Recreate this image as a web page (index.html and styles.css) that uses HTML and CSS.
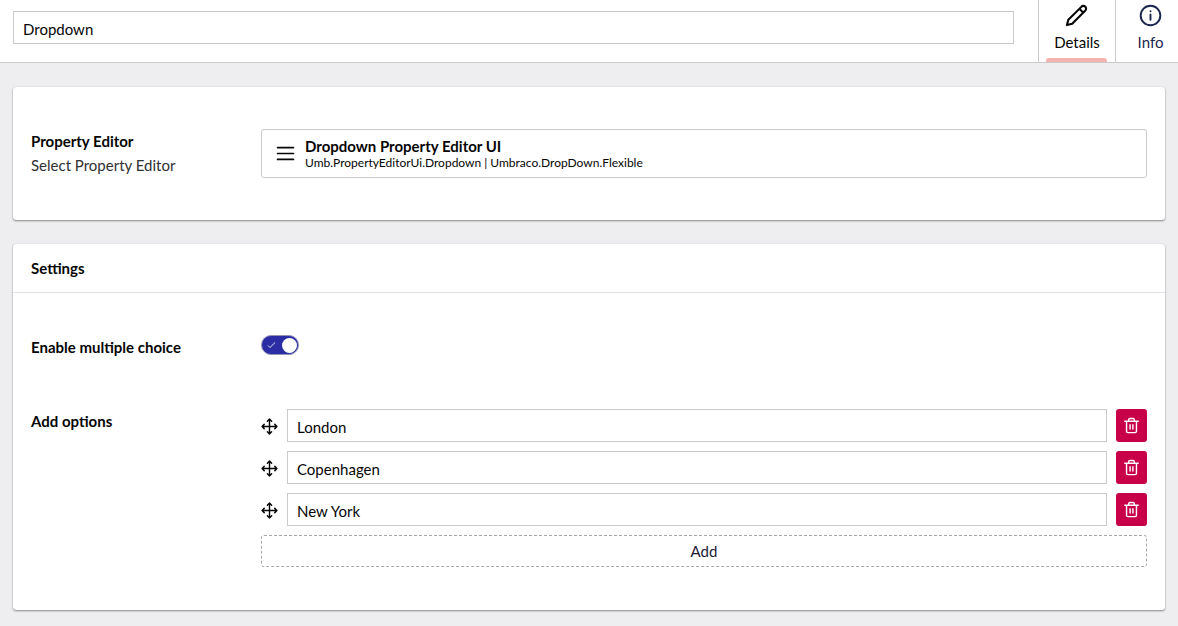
FILE: index.html
```html
<!DOCTYPE html>
<html lang="en">
<head>
<meta charset="utf-8">
<title>Dropdown</title>
<link rel="stylesheet" href="styles.css">
</head>
<body>
<svg class="sprite" aria-hidden="true">
  <symbol id="move" viewBox="0 0 24 24"><path d="M4.500 9l-3 3 3 3M9 4.500l3-3 3 3M15 19.500l-3 3-3-3M19.500 9l3 3-3 3M1.500 12h21M12 1.500v21"/></symbol>
  <symbol id="trash" viewBox="0 0 24 24"><path d="M2.500 6h19M5 6v14a2 2 0 0 0 2 2h10a2 2 0 0 0 2-2V6M8 6V4a2 2 0 0 1 2-2h4a2 2 0 0 1 2 2v2M10 11v6M14 11v6"/></symbol>
</svg>
<header class="header">
  <input class="input name" value="Dropdown" aria-label="Name">
  <nav class="tabs">
    <a class="tab active">
      <svg class="icon tab-icon pencil" viewBox="0 0 24 24"><path d="M17 3a2.850 2.830 0 1 1 4 4L7.500 20.500 2 22l1.500-5.500ZM15 5l4 4"/></svg>
      <span>Details</span>
    </a>
    <a class="tab">
      <svg class="icon tab-icon" viewBox="0 0 24 24"><circle cx="12" cy="12" r="10.250"/><path d="M12 16.500v-5.500M12 7.500h.01"/></svg>
      <span>Info</span>
    </a>
  </nav>
</header>
<main class="content">
  <section class="card editor-card">
    <div class="row">
      <div class="label">
        <b>Property Editor</b>
        <span class="description">Select Property Editor</span>
      </div>
      <div class="reference">
        <svg class="icon list-icon" viewBox="0 0 24 24"><path d="M2 4.500h20M2 12h20M2 19.500h20"/></svg>
        <div class="reference-text">
          <b>Dropdown Property Editor UI</b>
          <small>Umb.PropertyEditorUi.Dropdown | Umbraco.DropDown.Flexible</small>
        </div>
      </div>
    </div>
  </section>
  <section class="card settings-card">
    <h2 class="headline">Settings</h2>
    <div class="row choice-row">
      <div class="label"><b>Enable multiple choice</b></div>
      <div class="toggle">
        <svg class="check" viewBox="0 0 10 8"><path d="M1 4.500l2.300 2.300L9 1.200"/></svg>
        <span class="knob"></span>
      </div>
    </div>
    <div class="row options-row">
      <div class="label"><b>Add options</b></div>
      <div class="options">
        <div class="option">
          <svg class="icon move-icon"><use href="#move"/></svg>
          <input class="input" value="London" aria-label="Option 1">
          <button class="delete" aria-label="Delete"><svg class="icon trash-icon"><use href="#trash"/></svg></button>
        </div>
        <div class="option">
          <svg class="icon move-icon"><use href="#move"/></svg>
          <input class="input" value="Copenhagen" aria-label="Option 2">
          <button class="delete" aria-label="Delete"><svg class="icon trash-icon"><use href="#trash"/></svg></button>
        </div>
        <div class="option">
          <svg class="icon move-icon"><use href="#move"/></svg>
          <input class="input" value="New York" aria-label="Option 3">
          <button class="delete" aria-label="Delete"><svg class="icon trash-icon"><use href="#trash"/></svg></button>
        </div>
        <button class="add">Add</button>
      </div>
    </div>
  </section>
</main>
</body>
</html>
```
FILE: styles.css
```css
* { box-sizing: border-box; }
body {
  margin: 0;
  height: 626px;
  overflow: hidden;
  background: #eeeef0;
  color: #060606;
  font: 15px/24px Lato, sans-serif;
}
.sprite { display: none; }
.icon {
  flex: none;
  fill: none;
  stroke: currentColor;
  stroke-width: 2;
  stroke-linecap: round;
  stroke-linejoin: round;
}
.header {
  display: flex;
  justify-content: space-between;
  height: 63px;
  padding-left: 13px;
  background: #fff;
  border-bottom: 1px solid #cacaca;
}
.input {
  flex: 1;
  min-width: 0;
  height: 33px;
  padding: 2px 9px 0;
  border: 1px solid #cacaca;
  border-radius: 0;
  background: #fff;
  color: #060606;
  font: inherit;
}
.header .name { flex: none; width: 1001px; margin-top: 11px; }
.tabs { display: flex; width: 140px; }
.tab {
  position: relative;
  display: flex;
  flex: none;
  flex-direction: column;
  align-items: center;
  width: 77px;
  padding-top: 4px;
  border-left: 1px solid #cacaca;
  color: #1b264f;
}
.tab:last-child { width: 70px; }
.tab.active { color: #060606; }
.tab.active::after {
  content: "";
  position: absolute;
  left: 7px;
  right: 8px;
  bottom: 0;
  height: 4px;
  border-radius: 3px 3px 0 0;
  background: #f5b3ad;
}
.tab-icon { width: 23px; height: 23px; margin-bottom: 3px; }
.pencil { margin-right: 1px; stroke-width: 2.2; }
.content {
  display: flex;
  flex-direction: column;
  gap: 24px;
  padding: 24px 13px 0;
}
.card {
  border-radius: 3px;
  background: #fff;
  box-shadow: 0 1px 2px rgba(0, 0, 0, .42), 0 0 1px rgba(0, 0, 0, .2);
}
.editor-card { height: 133px; padding-top: 42px; }
.settings-card { height: 366px; }
.row { display: flex; padding: 0 18px; }
.label {
  display: flex;
  flex: none;
  flex-direction: column;
  width: 230px;
}
.description { color: #303033; }
.reference {
  display: flex;
  flex: 1;
  align-items: center;
  gap: 10px;
  height: 49px;
  padding-left: 14px;
  border: 1px solid #cacaca;
  border-radius: 3px;
}
.list-icon { width: 19px; height: 19px; stroke-width: 2.2; }
.reference-text { display: flex; flex-direction: column; line-height: 18px; }
.reference-text small { font-size: 12px; line-height: 15px; }
.headline {
  height: 49px;
  margin: 0;
  padding: 0 18px;
  border-bottom: 1px solid #e1e1e3;
  font-size: 15px;
  line-height: 48px;
}
.choice-row { height: 116px; padding-top: 42px; }
.toggle {
  display: flex;
  align-items: center;
  justify-content: space-between;
  width: 38px;
  height: 20px;
  padding: 0 1.5px 0 5px;
  border: 1px solid #9293b5;
  border-radius: 10px;
  background: #2a2da3;
}
.check { width: 9px; height: 8px; fill: none; stroke: #e4e5f5; stroke-width: 1.1; }
.knob { width: 15px; height: 15px; border-radius: 50%; background: #fff; }
.options { display: flex; flex: 1; flex-direction: column; gap: 9px; }
.option { display: flex; align-items: center; gap: 9px; }
.move-icon { width: 17px; height: 17px; margin-top: 2px; }
.delete {
  display: flex;
  align-items: center;
  justify-content: center;
  width: 31px;
  height: 33px;
  padding: 0;
  border: 0;
  border-radius: 3px;
  background: #c70048;
  color: #fff;
}
.trash-icon { width: 17px; height: 17px; }
.add {
  height: 32px;
  padding: 0;
  border: 1px dashed #a8a8a8;
  border-radius: 3px;
  background: #fff;
  color: #1b1b37;
  font: inherit;
}
```
